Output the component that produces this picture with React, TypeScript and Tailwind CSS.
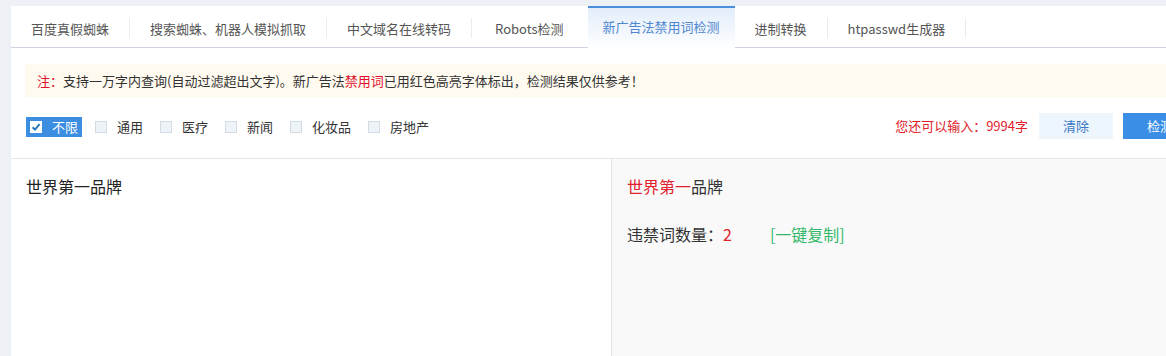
import React from 'react';

const FONT = '"Noto Sans CJK SC", "Noto Sans", "Liberation Sans", sans-serif';

const TABS = [
  '百度真假蜘蛛',
  '搜索蜘蛛、机器人模拟抓取',
  '中文域名在线转码',
  'Robots检测',
  '新广告法禁用词检测',
  '进制转换',
  'htpasswd生成器',
];
const ACTIVE = 4;

const CATS = ['不限', '通用', '医疗', '新闻', '化妆品', '房地产'];

function CheckItem({ label, checked }: { label: string; checked?: boolean }) {
  return (
    <label
      className={`flex items-center h-5 px-1 text-[13px] ${
        checked ? 'bg-[#3b8ee0] text-white' : 'text-[#333]'
      }`}
    >
      {checked ? (
        <span className="w-3 h-3 bg-white flex items-center justify-center">
          <svg width="10" height="10" viewBox="0 0 10 10">
            <path d="M1.5 5.2 L4 7.6 L8.6 2.2" fill="none" stroke="#2677b8" strokeWidth="2" />
          </svg>
        </span>
      ) : (
        <span className="w-3 h-3 bg-[#eef3f7] border border-[#d3dce4]" />
      )}
      <span className="ml-[10px] leading-5">{label}</span>
    </label>
  );
}

export default function App() {
  return (
    <div
      className="w-[1166px] h-[356px] overflow-hidden bg-[#edf1f6] pt-[6px] pl-[11px]"
      style={{ fontFamily: FONT }}
    >
      <div className="w-[1200px] h-[400px] bg-white flex flex-col">
        {/* tabs */}
        <ul className="flex h-[42px] border-b border-[#cdd3e2] m-0 p-0 list-none">
          {TABS.map((t, i) =>
            i === ACTIVE ? (
              <li
                key={t}
                className="relative -mb-px h-[43px] px-[15px] pt-[7px] border-t-2 border-[#4a8fdc] bg-gradient-to-b from-[#e2edfa] to-white text-[13px] text-[#4f86cf] leading-[24px]"
              >
                {t}
              </li>
            ) : (
              <li key={t} className="flex items-center h-full text-[13px] text-[#555]">
                <span
                  className={`pt-[4px] leading-[20px] ${
                    i === ACTIVE - 1 ? 'pl-[23px] pr-[24px]' : 'px-5'
                  }`}
                >
                  {t}
                </span>
                {i !== ACTIVE - 1 && <span className="w-px h-5 bg-[#ececec] mt-[2px]" />}
              </li>
            )
          )}
        </ul>

        {/* notice */}
        <div className="mx-[14px] mt-[16px] h-[33px] bg-[#fffaf0] pl-3 flex items-center text-[13px] text-[#333]">
          <span className="text-[#e0102b]">注：</span>
          <span>支持一万字内查询(自动过滤超出文字)。新广告法</span>
          <span className="text-[#e0102b]">禁用词</span>
          <span>已用红色高亮字体标出，检测结果仅供参考！</span>
        </div>

        {/* options */}
        <div className="flex items-center justify-between pl-[15px] pr-[14px] mt-4 h-[26px]">
          <div className="flex items-center gap-[9px] mt-px">
            {CATS.map((c, i) => (
              <CheckItem key={c} label={c} checked={i === 0} />
            ))}
          </div>
          <div className="flex items-center">
            <span className="text-[13px] text-[#e0202a]">您还可以输入：9994字</span>
            <button className="ml-[11px] w-[74px] h-[26px] bg-[#edf5fd] text-[13px] text-[#3a78c2]">
              清除
            </button>
            <button className="ml-[10px] w-[74px] h-[26px] bg-[#3a8ee6] text-[13px] text-white">
              检测
            </button>
          </div>
        </div>

        {/* panes */}
        <div className="mt-[19px] border-t border-[#e6e6e6] flex flex-1">
          <div className="w-[600px] pl-[15px] pt-[15px] text-[16px] leading-6 text-[#222]">世界第一品牌</div>
          <div className="flex-1 border-l border-[#e3e3e3] bg-[#f9f9f9] pl-[15px] pt-[15px] text-[16px] leading-6 text-[#333]">
            <div>
              <span className="text-[#e0202a]">世界第一</span>品牌
            </div>
            <div className="mt-6 flex">
              <span>违禁词数量：</span>
              <span className="text-[#e0202a]">2</span>
              <span className="ml-[38px] text-[#34b86a]">[一键复制]</span>
            </div>
          </div>
        </div>
      </div>
    </div>
  );
}
